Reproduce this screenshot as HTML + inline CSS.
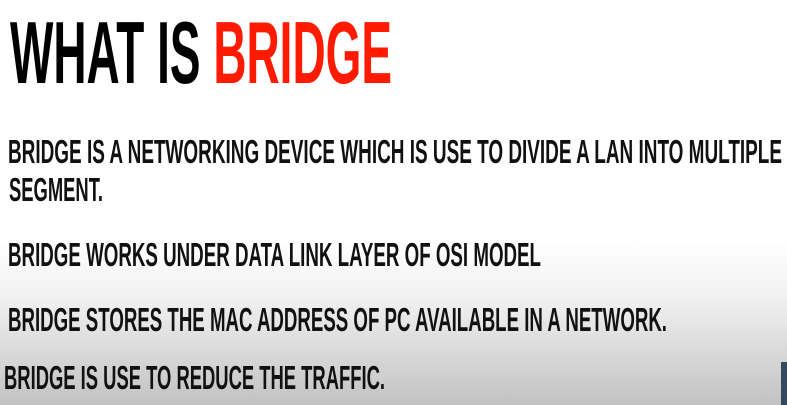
<!DOCTYPE html>
<html><head><meta charset="utf-8"><style>
html,body{margin:0;padding:0}
body{width:787px;height:405px;overflow:hidden;position:relative;background:linear-gradient(#fff 0px,#fff 240px,#f0f0f0 300px,#c2c2c2 405px);font-family:"Liberation Sans",sans-serif;font-weight:bold;color:#111}
.t{position:absolute;white-space:nowrap;line-height:1;transform-origin:0 0}
.b{font-size:33px}
.r{color:#ff1a00}
.box{position:absolute;left:781px;top:362px;width:6px;height:43px;background:#34495e}
</style></head><body>
<div class="t" data-w="382" style="left:10px;top:9px;font-size:88px;color:#000">WHAT IS <span class="r">BRIDGE</span></div>
<div class="t b" data-w="774" style="left:8px;top:135px">BRIDGE IS A NETWORKING DEVICE WHICH IS USE TO DIVIDE A LAN INTO MULTIPLE</div>
<div class="t b" data-w="94" style="left:9px;top:173px">SEGMENT.</div>
<div class="t b" data-w="533" style="left:8px;top:238px">BRIDGE WORKS UNDER DATA LINK LAYER OF OSI MODEL</div>
<div class="t b" data-w="659" style="left:8px;top:303px">BRIDGE STORES THE MAC ADDRESS OF PC AVAILABLE IN A NETWORK.</div>
<div class="t b" data-w="381" style="left:4px;top:361px">BRIDGE IS USE TO REDUCE THE TRAFFIC.</div>
<div class="box"></div>
<script>
document.querySelectorAll('.t').forEach(function(e){var w=e.getBoundingClientRect().width;e.style.transform='scaleX('+(e.dataset.w/w)+')';});
</script>
</body></html>
